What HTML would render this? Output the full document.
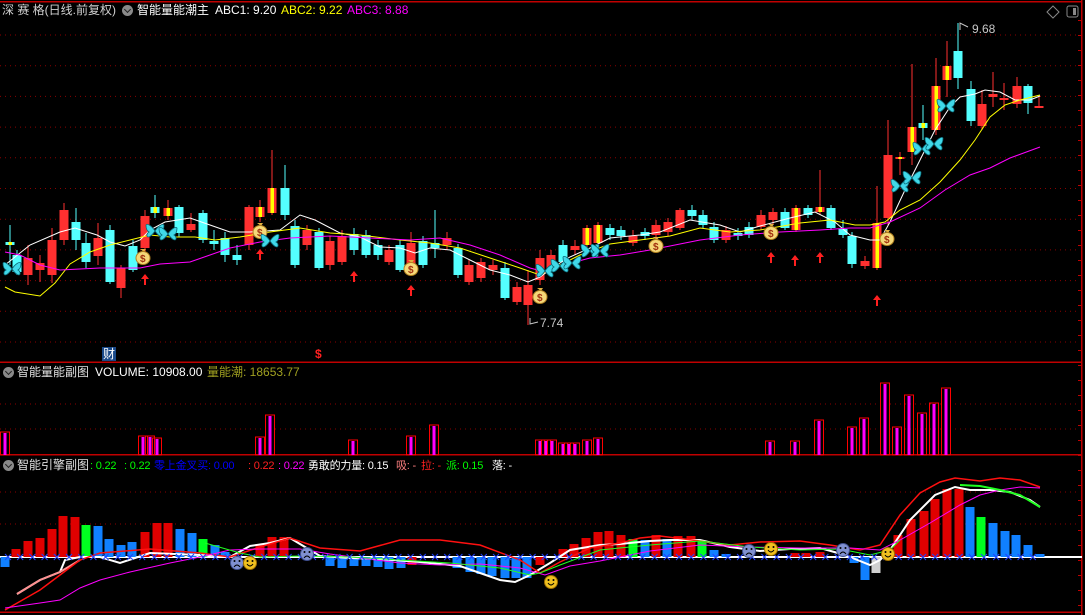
<!DOCTYPE html>
<html><head><meta charset="utf-8"><style>
html,body{margin:0;padding:0;background:#000;}
#w{position:relative;width:1085px;height:615px;overflow:hidden;background:#000;font-family:"Liberation Sans","Noto Sans CJK SC",sans-serif;font-size:12px;}
.t{position:absolute;white-space:nowrap;line-height:14px;}
.s{font-size:11px;letter-spacing:-0.2px}
svg{position:absolute;left:0;top:0;}
.chev{position:absolute;width:11px;height:11px;border-radius:50%;background:#8a8a8a;}
.chev:after{content:"";position:absolute;left:3px;top:2px;width:4px;height:4px;border-right:1.5px solid #222;border-bottom:1.5px solid #222;transform:rotate(45deg);}
</style></head><body><div id="w">
<svg id="s" width="1085" height="615"></svg>
<div class="t" style="left:2px;top:3px;color:#d0d0d0">深 赛 格(日线.前复权)</div>
<div class="chev" style="left:122px;top:5px"></div>
<div class="t" style="left:137px;top:3px;color:#fff">智能量能潮主</div>
<div class="t" style="left:215px;top:3px;color:#fff">ABC1: 9.20</div>
<div class="t" style="left:281px;top:3px;color:#ffff00">ABC2: 9.22</div>
<div class="t" style="left:347px;top:3px;color:#ff00ff">ABC3: 8.88</div>
<div class="t" style="left:972px;top:22px;color:#c8c8c8">9.68</div>
<div class="t" style="left:540px;top:316px;color:#c8c8c8">7.74</div>
<div class="t" style="left:102px;top:347px;color:#fff;background:#1a4a8a;padding:0 1px">财</div>
<div class="t" style="left:315px;top:347px;color:#ff2020;font-weight:bold">$</div>
<div class="chev" style="left:3px;top:367px"></div>
<div class="t" style="left:17px;top:365px;color:#e0e0e0">智能量能副图</div>
<div class="t" style="left:95px;top:365px;color:#fff">VOLUME: 10908.00</div>
<div class="t" style="left:207px;top:365px;color:#a0a020">量能潮: 18653.77</div>
<div class="chev" style="left:3px;top:460px"></div>
<div class="t" style="left:17px;top:458px;color:#e0e0e0">智能引擎副图</div>
<div class="t s" style="left:90px;top:459px;color:#00ff00">: 0.22</div>
<div class="t s" style="left:124px;top:459px;color:#00ff00">: 0.22</div>
<div class="t s" style="left:154px;top:459px;color:#0000ff">零上金叉买: 0.00</div>
<div class="t s" style="left:248px;top:459px;color:#ff2020">: 0.22</div>
<div class="t s" style="left:278px;top:459px;color:#ff00ff">: 0.22</div>
<div class="t s" style="left:308px;top:459px;color:#fff">勇敢的力量: 0.15</div>
<div class="t s" style="left:396px;top:459px;color:#ff8080">吸: -</div>
<div class="t s" style="left:421px;top:459px;color:#ff2020">拉: -</div>
<div class="t s" style="left:446px;top:459px;color:#00ff00">派: 0.15</div>
<div class="t s" style="left:492px;top:459px;color:#fff">落: -</div>
<script>
var h='';
function R(x,y,w,hh,c,e){h+='<rect x="'+x+'" y="'+y+'" width="'+w+'" height="'+hh+'" fill="'+c+'" '+(e||'')+'/>';}
function L(pts,c,w){h+='<polyline points="'+pts.map(p=>p.join(',')).join(' ')+'" fill="none" stroke="'+c+'" stroke-width="'+(w||1)+'"/>';}
function D(y,x2){h+='<line x1="0" y1="'+y+'" x2="'+(x2||1080)+'" y2="'+y+'" stroke="#8b0000" stroke-dasharray="1,4"/>';}
R(0,1,1082,1.5,'#c00000');R(1081,0,1.5,615,'#c00000');R(0,361.5,1082,1.5,'#c00000');R(0,454,1082,1.5,'#c00000');R(0,611.5,1082,1.5,'#c00000');
for(var y=35;y<350;y+=30.7)D(y);
D(404);D(429);D(492);D(524);
for(var y=20;y<610;y+=15)R(1078,y,3,1,'#c00000');
var C=[[10,242,245,225,265,'k'],[17,255,272,250,275,'c'],[28,258,275,245,285,'r'],[40,263,270,255,282,'r'],[52,240,275,228,283,'r'],[64,210,240,203,245,'r'],[76,222,240,208,250,'c'],[86,243,262,233,268,'c'],[98,238,256,223,265,'r'],[110,230,282,225,284,'c'],[121,268,288,265,298,'r'],[133,246,270,240,272,'c'],[145,216,248,210,262,'r'],[155,207,213,195,218,'k'],[168,208,216,200,220,'y'],[179,207,233,205,237,'c'],[191,224,230,213,232,'r'],[203,213,240,210,243,'c'],[214,241,244,230,250,'c'],[225,238,255,232,262,'c'],[237,255,260,245,265,'c'],[249,207,245,205,250,'r'],[260,207,217,200,222,'y'],[272,188,213,150,215,'y'],[285,188,215,165,220,'c'],[295,226,265,220,268,'c'],[307,230,245,225,250,'r'],[319,232,268,228,270,'c'],[330,241,265,236,270,'r'],[342,236,262,230,265,'r'],[354,234,250,228,255,'c'],[366,235,255,230,258,'c'],[378,245,255,240,260,'c'],[389,250,262,245,265,'r'],[400,245,270,240,272,'c'],[411,243,267,232,275,'r'],[423,241,265,236,268,'c'],[435,243,248,210,258,'c'],[447,238,245,232,250,'r'],[458,248,275,244,278,'c'],[469,265,282,260,285,'r'],[481,262,278,258,282,'r'],[493,265,270,260,275,'r'],[505,268,298,262,300,'c'],[517,287,302,282,305,'r'],[528,285,305,270,325,'r'],[540,258,280,250,285,'r'],[551,255,270,250,274,'r'],[563,245,262,240,265,'c'],[575,246,250,240,255,'r'],[587,228,245,225,250,'y'],[598,225,243,222,246,'y'],[610,228,235,224,240,'c'],[621,230,236,226,240,'c'],[633,236,243,230,246,'r'],[645,232,236,228,240,'c'],[656,225,235,220,240,'r'],[668,222,232,218,236,'r'],[680,210,228,208,230,'r'],[692,210,216,205,220,'c'],[703,215,225,210,228,'c'],[714,227,240,222,243,'c'],[726,230,240,226,243,'r'],[738,233,236,228,240,'c'],[749,227,235,222,238,'c'],[761,215,227,210,230,'r'],[773,212,220,208,224,'r'],[785,212,228,208,230,'c'],[796,208,230,205,232,'y'],[808,208,215,205,218,'c'],[820,207,212,170,215,'y'],[831,208,228,205,230,'c'],[843,229,235,220,238,'c'],[852,236,264,232,268,'c'],[865,261,266,256,269,'r'],[877,223,268,186,270,'y'],[888,155,218,120,225,'r'],[900,157,159,152,175,'y'],[912,127,152,64,165,'y'],[923,123,128,105,140,'k'],[936,86,130,58,135,'y'],[947,66,80,41,97,'y'],[958,51,78,23,89,'c'],[971,89,121,81,126,'c'],[982,104,126,90,130,'r'],[993,94,97,72,107,'r'],[1004,98,100,83,110,'r'],[1017,86,104,77,108,'r'],[1028,86,103,84,114,'c'],[1039,106,108,97,108,'r']];
C.forEach(function(c){var col=(c[5]=='c'||c[5]=='k')?'#54ffff':'#ff3030';var w=9;
R(c[0]-0.5,c[3],1,c[4]-c[3],col);R(c[0]-w/2,c[1],w,Math.max(2,c[2]-c[1]),col);
if(c[5]=='y'||c[5]=='k')R(c[0]-1.5,c[1],3.5,Math.max(2,c[2]-c[1]),'#ffff00');});
L([[5,265],[30,245],[60,232],[75,228],[97,235],[110,242],[125,246],[140,240],[150,230],[165,222],[190,218],[210,225],[230,232],[250,232],[280,230],[300,215],[315,220],[340,233],[360,237],[380,247],[400,248],[415,253],[430,248],[450,250],[470,260],[490,270],[510,275],[528,282],[540,277],[555,266],[570,257],[590,248],[610,238],[640,235],[660,232],[690,220],[720,225],[740,232],[760,226],[790,218],[815,212],[835,222],[850,235],[870,240],[880,240],[890,222],[905,190],[920,160],[935,130],[950,107],[960,97],[975,94],[985,90],[1000,92],[1015,100],[1030,100],[1040,96]],'#fff');
L([[5,287],[15,292],[40,296],[55,283],[70,264],[90,252],[110,245],[130,240],[150,235],[170,237],[195,237],[215,240],[240,237],[270,232],[300,228],[330,233],[360,235],[400,240],[430,243],[460,248],[490,258],[520,268],[540,275],[560,265],[580,255],[610,244],[640,240],[670,236],[700,228],[730,232],[760,230],[800,223],[830,220],[855,225],[870,225],[885,222],[900,210],[920,200],[940,182],[960,160],[975,140],[990,117],[1005,105],[1020,100],[1040,95]],'#ffff00');
L([[5,252],[20,255],[40,265],[60,270],[100,268],[140,268],[160,264],[190,262],[210,255],[230,248],[260,242],[290,238],[330,236],[370,238],[410,240],[440,238],[470,245],[500,255],[530,268],[545,272],[560,266],[590,258],[620,255],[650,250],[700,240],[740,235],[780,232],[820,230],[850,228],[870,228],[890,222],[920,208],[945,190],[970,175],[990,168],[1010,158],[1040,147]],'#ff00ff');
[[145,280],[260,255],[354,277],[411,291],[771,258],[795,261],[820,258],[877,301]].forEach(function(a){h+='<path d="M'+a[0]+' '+(a[1]-6)+'l-4 5h3v6h2v-6h3z" fill="#ff2020"/>';});
[[143,257],[260,231],[411,268],[540,296],[656,245],[771,232],[887,238]].forEach(function(m){h+='<path d="M'+(m[0]-3)+' '+(m[1]-8)+'h6l-2 3z" fill="#e0b040"/><ellipse cx="'+m[0]+'" cy="'+(m[1]+1)+'" rx="7" ry="6.5" fill="#f5d878" stroke="#b08020"/><text x="'+(m[0]-3)+'" y="'+(m[1]+5)+'" font-size="10" fill="#a03010" font-weight="bold" font-family="Liberation Sans">$</text>';});
[[12,268],[155,230],[168,233],[270,240],[545,270],[560,265],[572,262],[590,250],[600,250],[900,185],[912,177],[922,148],[934,143],[946,105]].forEach(function(b){var x=b[0],y=b[1];h+='<path d="M'+x+' '+(y+1)+'c-3-5-8-8-9-6c0 3 1 6 3 7c-2 1-3 4-1 5c2 0 5-3 7-6zM'+x+' '+(y+1)+'c3-5 8-8 9-6c0 3-1 6-3 7c2 1 3 4 1 5c-2 0-5-3-7-6z" fill="#40d8e8" stroke="#0a6a78" stroke-width="0.8"/>';});
L([[960,30],[960,23],[968,27]],'#c8c8c8');L([[530,318],[530,324],[538,322]],'#c8c8c8');
h+='<path d="M1053 6l6 6l-6 6l-6-6z" fill="none" stroke="#888"/><rect x="1067" y="6" width="11" height="11" rx="2" fill="none" stroke="#888"/><rect x="1073" y="8" width="3" height="7" fill="#888"/>';
[[5,432],[143,436],[150,436],[157,438],[260,437],[270,415],[353,440],[411,436],[434,425],[540,440],[546,440],[552,440],[563,443],[569,443],[575,443],[587,440],[598,438],[770,441],[795,441],[819,420],[852,427],[864,418],[885,383],[897,427],[909,395],[922,413],[934,403],[946,388]].forEach(function(v){R(v[0]-4.5,v[1],9,455-v[1],'none','stroke="#ff0000" stroke-width="1"');R(v[0]-1.5,v[1]+1,3,454-v[1],'#ff00ff');});
R(0,556,1082,2,'#fff');
var B=[[5,567,'b'],[16,549,'r'],[28,541,'r'],[40,538,'r'],[52,529,'r'],[63,516,'r'],[75,517,'r'],[86,525,'g'],[98,526,'b'],[109,539,'b'],[121,545,'b'],[132,542,'b'],[145,532,'r'],[157,523,'r'],[168,523,'r'],[180,529,'b'],[192,533,'b'],[203,539,'g'],[215,545,'b'],[225,552,'b'],[260,544,'r'],[272,537,'r'],[284,537,'r'],[330,566,'b'],[342,568,'b'],[354,566,'b'],[366,566,'b'],[378,567,'b'],[389,569,'b'],[401,568,'b'],[412,565,'r'],[457,568,'b'],[470,572,'b'],[481,574,'b'],[492,576,'b'],[505,578,'b'],[516,578,'b'],[527,578,'b'],[540,565,'r'],[563,549,'r'],[574,544,'r'],[586,538,'r'],[598,532,'r'],[609,531,'r'],[621,535,'r'],[633,539,'g'],[645,540,'b'],[656,535,'r'],[667,539,'b'],[678,536,'r'],[691,536,'r'],[702,541,'g'],[714,550,'b'],[726,554,'b'],[795,553,'r'],[806,553,'r'],[820,552,'r'],[854,563,'b'],[865,580,'b'],[876,573,'w'],[898,535,'r'],[911,519,'r'],[924,511,'r'],[935,499,'r'],[947,489,'r'],[959,489,'r'],[970,507,'b'],[981,517,'g'],[993,523,'b'],[1005,531,'b'],[1016,535,'b'],[1028,545,'b'],[1040,554,'b']];
var cols={r:'#e00000',g:'#00ff20',b:'#1080ff',w:'#d0d0d0'};
B.forEach(function(b){var y0=Math.min(b[1],557),y1=Math.max(b[1],557);R(b[0]-4.5,y0,9,y1-y0,cols[b[2]]);});
L([[17,594],[40,580],[60,572],[65,560],[80,557],[100,557],[120,563],[135,558],[150,553],[200,555],[230,557],[250,546],[270,543],[290,538],[320,556],[350,558],[380,559],[420,562],[460,566],[480,573],[500,580],[515,582],[530,575],[550,563],[570,550],[600,545],[620,544],[650,541],[670,540],[700,540],[730,547],[760,551],[790,549],[820,548],[845,555],[870,565],[880,560],[890,550],[910,520],[935,495],[955,487],[970,490],[990,490],[1010,492],[1030,500],[1040,507]],'#fff',2);
L([[17,594],[40,580],[60,572],[80,560]],'#ff9090',2);
L([[5,610],[40,590],[60,575],[80,560],[100,553],[150,549],[200,553],[230,557],[260,547],[290,538],[320,548],[360,551],[400,540],[440,540],[480,545],[520,560],[540,573],[560,562],[590,548],[620,543],[640,538],[660,536],[700,541],[730,545],[760,542],[800,541],[830,545],[860,550],[880,545],[900,515],[920,493],[940,482],[955,478],[980,481],[1000,478],[1020,480],[1040,487]],'#ff1010',1.5);
L([[5,608],[40,603],[60,600],[80,588],[100,580],[130,572],[170,563],[200,557],[230,550],[260,549],[300,549],[330,554],[360,558],[400,563],[440,565],[480,564],[520,568],[545,575],[570,566],[600,561],[650,551],[700,545],[750,547],[800,548],[850,548],[880,550],[900,540],[930,523],[960,505],[980,495],[1000,490],[1020,487],[1040,488]],'#ff00ff',1);
L([[205,543],[240,553],[260,557],[300,556],[350,557],[400,560],[450,563],[500,568],[530,575],[540,573],[560,565],[600,550],[650,545],[700,541],[750,547],[800,550],[840,549],[870,555],[890,550],[900,540]],'#20ff20',1);
L([[960,485],[980,486],[1000,490],[1020,495],[1040,507]],'#20ff20',2);
for(var x=8;x<1045;x+=12.2)h+='<path d="M'+(x-3)+' 554l6 6M'+(x+3)+' 554l-6 6" stroke="#2040ff" stroke-width="1"/>';
function sm(x,y,happy){h+='<circle cx="'+x+'" cy="'+y+'" r="6.5" fill="'+(happy?'#f0c020':'#8090d0')+'" stroke="'+(happy?'#a07000':'#405090')+'"/><circle cx="'+(x-2.5)+'" cy="'+(y-2)+'" r="1" fill="#000"/><circle cx="'+(x+2.5)+'" cy="'+(y-2)+'" r="1" fill="#000"/><path d="M'+(x-3)+' '+(happy?y+1:y+4)+'q3 '+(happy?4:-4)+' 6 0" fill="none" stroke="#000"/>';}
sm(237,563,0);sm(250,563,1);sm(307,554,0);sm(551,582,1);sm(749,551,0);sm(771,549,1);sm(843,550,0);sm(888,554,1);
document.getElementById('s').innerHTML=h;
</script>
</div></body></html>
